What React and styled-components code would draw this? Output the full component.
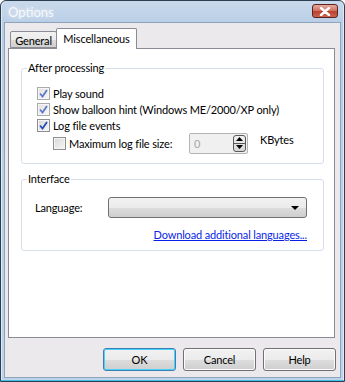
import React from "react";
import styled, { createGlobalStyle } from "styled-components";

const Global = createGlobalStyle`
  html, body { margin: 0; padding: 0; background: #fff; }
  body {
    font-family: "Segoe UI", Lato, "Liberation Sans", sans-serif;
    font-size: 11px;
    letter-spacing: -0.15px;
    color: #000;
  }
`;

const Window = styled.div`
  width: 345px;
  height: 382px;
  box-sizing: border-box;
  display: flex;
  flex-direction: column;
  border: 1px solid #2c3e52;
  border-radius: 6px 6px 0 0;
  background: linear-gradient(180deg, #c9d9ec 0%, #b9cee6 22px, #bcd3ea 100%);
  box-shadow: inset 0 -1px 0 #41c2ea, inset 1px 0 0 #dfeaf6, inset -1px 0 0 #dfeaf6;
  overflow: hidden;
`;

const TitleBar = styled.div`
  height: 21px;
  display: flex;
  align-items: flex-start;
  justify-content: space-between;
  padding: 0 6px 0 7px;
  flex-shrink: 0;
`;

const Title = styled.span`
  margin-top: 3px;
  color: #f6f8fb;
  font-size: 13px;
  letter-spacing: 0;
  text-shadow: 0 0 5px rgba(255, 255, 255, 0.7);
`;

const CloseBtn = styled.div`
  box-sizing: border-box;
  width: 26px;
  height: 14px;
  margin-top: 3px;
  border: 1px solid #5a2320;
  border-radius: 3px;
  background: linear-gradient(180deg, #e6aa9c 0%, #d27565 45%, #b8422f 55%, #cc6450 100%);
  display: flex;
  align-items: center;
  justify-content: center;
`;

const Client = styled.div`
  flex: 1;
  margin: 0 3px 3px 3px;
  background: #ece9ed;
  border: 1px solid #8ea4bd;
  display: flex;
  flex-direction: column;
  padding: 5px 5px 6px 3px;
`;

const TabRow = styled.div`
  display: flex;
  align-items: flex-end;
  height: 20px;
  padding-left: 2px;
  position: relative;
  z-index: 1;
`;

const Tab = styled.div`
  box-sizing: border-box;
  height: ${(p) => (p.$active ? "21px" : "17px")};
  width: ${(p) => (p.$active ? "81px" : "47px")};
  margin-left: ${(p) => (p.$active ? "-1px" : "0")};
  margin-bottom: ${(p) => (p.$active ? "-1px" : "0")};
  border: 1px solid #898c95;
  border-bottom: ${(p) => (p.$active ? "none" : "1px solid #898c95")};
  border-radius: 2px 2px 0 0;
  background: ${(p) =>
    p.$active ? "#fff" : "linear-gradient(180deg, #f2f2f2 0%, #ebebeb 50%, #dcdcdc 51%, #cfcfcf 100%)"};
  display: flex;
  justify-content: center;
  align-items: ${(p) => (p.$active ? "flex-start" : "center")};
  padding-top: ${(p) => (p.$active ? "2px" : "1px")};
  line-height: 15px;
`;

const Panel = styled.div`
  flex: 1;
  background: #fff;
  border: 1px solid #898c95;
  padding: 12px 10px 0 12px;
  display: flex;
  flex-direction: column;
  gap: 8px;
`;

const Group = styled.fieldset`
  margin: 0;
  border: 1px solid #d5dfe5;
  border-radius: 3px;
  padding: 0;
  min-width: 0;
`;

const GroupBody = styled.div`
  display: flex;
  flex-direction: column;
  padding: ${(p) => p.$pad};
`;

const Legend = styled.legend`
  padding: 0 1px;
  margin-left: 5px;
  line-height: 14px;
`;

const CheckRow = styled.label`
  display: flex;
  align-items: center;
  height: 16px;
  padding-left: ${(p) => (p.$indent ? "16px" : "0")};
  gap: 3px;
  white-space: nowrap;
  flex-shrink: 0;
`;

const Box = styled.span`
  width: 11px;
  height: 11px;
  border: 1px solid #8f8f8f;
  background: linear-gradient(135deg, #d8d8d8 0%, #f6f6f6 100%);
  box-shadow: inset 0 0 0 1px #f4f4f4;
  display: inline-flex;
  align-items: center;
  justify-content: center;
  flex-shrink: 0;
  opacity: ${(p) => (p.$faded ? 0.75 : 1)};
`;

const SizeRow = styled.div`
  display: flex;
  align-items: center;
  height: 20px;
`;

const SizeLabel = styled.div`
  width: 152px;
  flex-shrink: 0;
`;

const SpinInput = styled.div`
  width: 59px;
  height: 21px;
  box-sizing: border-box;
  border: 1px solid #b4b4b4;
  border-radius: 2px;
  background: #f0f0f0;
  display: flex;
  align-items: center;
  justify-content: space-between;
  padding: 0 1px 0 4px;
  color: #a8a8a8;
  flex-shrink: 0;
`;

const Spinner = styled.div`
  width: 11px;
  height: 15px;
  border: 1px solid #5a5a5a;
  border-radius: 3px;
  display: flex;
  flex-direction: column;
  background: linear-gradient(180deg, #f2f2f2, #d6d6d6);
`;

const SpinHalf = styled.div`
  flex: 1;
  display: flex;
  align-items: center;
  justify-content: center;
  border-top: ${(p) => (p.$bottom ? "1px solid #5a5a5a" : "none")};
`;

const Unit = styled.span`
  margin-left: 12px;
  margin-top: -7px;
`;

const FieldRow = styled.div`
  display: flex;
  align-items: center;
  padding-left: 13px;
`;

const Label = styled.span`
  width: 74px;
`;

const Combo = styled.div`
  width: 200px;
  height: 21px;
  box-sizing: border-box;
  border: 1px solid #707070;
  border-radius: 3px;
  background: linear-gradient(180deg, #f2f2f2 0%, #ebebeb 50%, #dddddd 51%, #cfcfcf 100%);
  display: flex;
  align-items: center;
  justify-content: flex-end;
  padding-right: 7px;
`;

const LinkRow = styled.div`
  display: flex;
  justify-content: flex-end;
  margin-top: 10px;
  line-height: 14px;
`;

const Link = styled.a`
  color: #0a1fe8;
  text-decoration: underline;
  cursor: pointer;
`;

const ButtonBar = styled.div`
  display: flex;
  justify-content: flex-end;
  gap: 7px;
  margin-top: 10px;
  margin-right: -1px;
`;

const Button = styled.button`
  width: 73px;
  height: 23px;
  font-family: inherit;
  font-size: 11px;
  letter-spacing: inherit;
  color: #000;
  border: 1px solid ${(p) => (p.$default ? "#3c7fb1" : "#707070")};
  border-radius: 3px;
  background: linear-gradient(180deg, #f2f2f2 0%, #ebebeb 50%, #dddddd 51%, #cfcfcf 100%);
  box-shadow: inset 0 0 0 1px ${(p) => (p.$default ? "#48d2fb" : "#fcfcfc")};
  padding: 0;
`;

const Check = () => (
  <svg width="9" height="9" viewBox="0 0 9 9">
    <path d="M1 4.5 L3.5 7.5 L8 1" fill="none" stroke="#2a4bb8" strokeWidth="1.8" />
  </svg>
);

const CheckBox = ({ checked, faded, indent, children }) => (
  <CheckRow $indent={indent}>
    <Box $faded={faded}>{checked && <Check />}</Box>
    <span>{children}</span>
  </CheckRow>
);

export default function App() {
  return (
    <>
      <Global />
      <Window>
        <TitleBar>
          <Title>Options</Title>
          <CloseBtn>
            <svg width="12" height="9" viewBox="0 0 12 9">
              <path d="M2 1 L10 8 M10 1 L2 8" stroke="#fff" strokeWidth="2.4" strokeLinecap="round" />
            </svg>
          </CloseBtn>
        </TitleBar>
        <Client>
          <TabRow>
            <Tab>General</Tab>
            <Tab $active>Miscellaneous</Tab>
          </TabRow>
          <Panel>
            <Group>
              <Legend>After processing</Legend>
              <GroupBody $pad="10px 0 10px 15px">
                <CheckBox checked faded>Play sound</CheckBox>
                <CheckBox checked faded>Show balloon hint (Windows ME/2000/XP only)</CheckBox>
                <CheckBox checked>Log file events</CheckBox>
                <SizeRow>
                  <SizeLabel>
                    <CheckBox indent>Maximum log file size:</CheckBox>
                  </SizeLabel>
                  <SpinInput>
                    <span>0</span>
                    <Spinner>
                      <SpinHalf>
                        <svg width="7" height="4" viewBox="0 0 7 4"><path d="M0 4 L3.5 0 L7 4 Z" fill="#000" /></svg>
                      </SpinHalf>
                      <SpinHalf $bottom>
                        <svg width="7" height="4" viewBox="0 0 7 4"><path d="M0 0 L3.5 4 L7 0 Z" fill="#000" /></svg>
                      </SpinHalf>
                    </Spinner>
                  </SpinInput>
                  <Unit>KBytes</Unit>
                </SizeRow>
              </GroupBody>
            </Group>
            <Group>
              <Legend>Interface</Legend>
              <GroupBody $pad="11px 16px 8px 0">
                <FieldRow>
                  <Label>Language:</Label>
                  <Combo>
                    <svg width="8" height="4" viewBox="0 0 8 4"><path d="M0 0 L8 0 L4 4 Z" fill="#000" /></svg>
                  </Combo>
                </FieldRow>
                <LinkRow>
                  <Link>Download additional languages...</Link>
                </LinkRow>
              </GroupBody>
            </Group>
          </Panel>
          <ButtonBar>
            <Button $default>OK</Button>
            <Button>Cancel</Button>
            <Button>Help</Button>
          </ButtonBar>
        </Client>
      </Window>
    </>
  );
}
